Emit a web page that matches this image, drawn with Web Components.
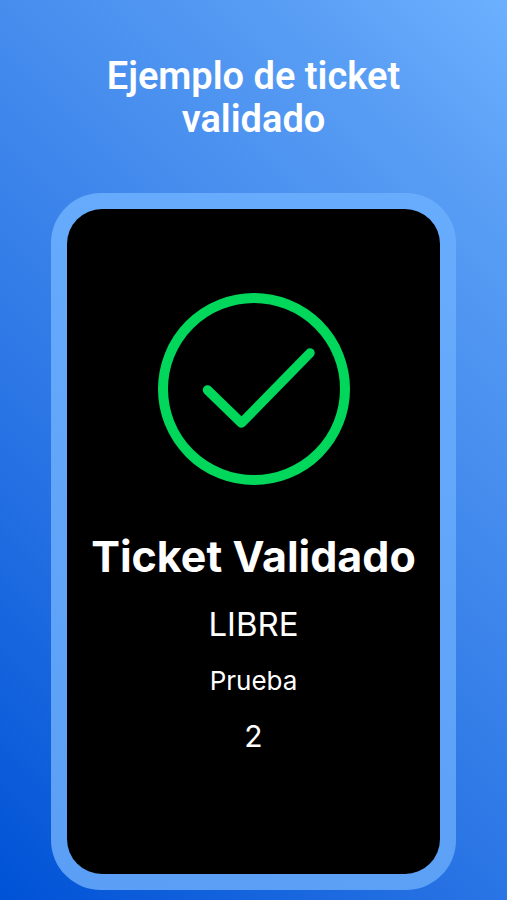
<!DOCTYPE html>
<html lang="es">
<head>
<meta charset="utf-8">
<meta name="viewport" content="width=device-width, initial-scale=1">
<title>Ejemplo de ticket validado</title>
<style>
body { margin: 0; }
</style>
</head>
<body>
<promo-page>
  <promo-heading slot="heading">Ejemplo de ticket validado</promo-heading>
  <device-frame>
    <ticket-result>
      <check-badge slot="icon"></check-badge>
      <span slot="status">Ticket Validado</span>
      <span slot="type">LIBRE</span>
      <span slot="name">Prueba</span>
      <span slot="count">2</span>
    </ticket-result>
  </device-frame>
</promo-page>

<template id="promo-page">
  <style>
    :host { display: flex; flex-direction: column; box-sizing: border-box; min-height: 100vh;
      padding: 55px 10% 10px; background: linear-gradient(45deg, #0052d6, #2a75e5 36%, #468dee 64%, #5a9ff5 85%, #6cb0ff); }
    main { flex: 1; display: flex; flex-direction: column; margin-top: 52px; }
    ::slotted(device-frame) { flex: 1; }
  </style>
  <slot name="heading"></slot>
  <main><slot></slot></main>
</template>

<template id="promo-heading">
  <style>
    :host { display: block; }
    h1 { margin: 0 auto; max-width: 320px; text-align: center; color: #fff;
      font: 600 38px/43px Roboto, sans-serif; }
  </style>
  <h1><slot></slot></h1>
</template>

<template id="device-frame">
  <style>
    :host { display: flex; box-sizing: border-box; padding: 16px; border-radius: 50px;
      background: linear-gradient(15deg, #5a9ff5, #68acfd); }
    section { flex: 1; display: flex; flex-direction: column; background: #000; border-radius: 35px; overflow: hidden; }
  </style>
  <section><slot></slot></section>
</template>

<template id="check-badge">
  <style>
    :host { display: block; width: 192px; }
    svg { display: block; width: 100%; }
  </style>
  <svg viewBox="0 0 192 192" fill="none" stroke="#00d75b" stroke-width="10" stroke-linecap="round" stroke-linejoin="round" role="img" aria-label="Validado">
    <circle cx="96" cy="96" r="91"></circle>
    <path d="M49.5 97 L83.5 130 L152 60" stroke-width="9.5"></path>
  </svg>
</template>

<template id="ticket-result">
  <style>
    :host { display: flex; flex-direction: column; align-items: center; padding: 84px 16px 40px;
      color: #fff; font-family: Inter, sans-serif; text-align: center; }
    h2, p { margin: 0; }
    h2 { margin-top: 43px; font-size: 43px; line-height: 56px; font-weight: 700; white-space: nowrap; }
    .type { margin-top: 20px; font-size: 33px; line-height: 40px; font-weight: 400; }
    .name { margin-top: 19px; font-size: 26px; line-height: 36px; }
    .count { margin-top: 19px; font-size: 30px; line-height: 36px; }
  </style>
  <slot name="icon"></slot>
  <h2><slot name="status"></slot></h2>
  <p class="type"><slot name="type"></slot></p>
  <p class="name"><slot name="name"></slot></p>
  <p class="count"><slot name="count"></slot></p>
</template>

<script>
class TemplateElement extends HTMLElement {
  constructor() {
    super();
    const template = document.getElementById(this.localName);
    this.attachShadow({ mode: 'open' }).append(template.content.cloneNode(true));
  }
}
for (const name of ['promo-page', 'promo-heading', 'device-frame', 'check-badge', 'ticket-result']) {
  customElements.define(name, class extends TemplateElement {});
}
</script>
</body>
</html>
